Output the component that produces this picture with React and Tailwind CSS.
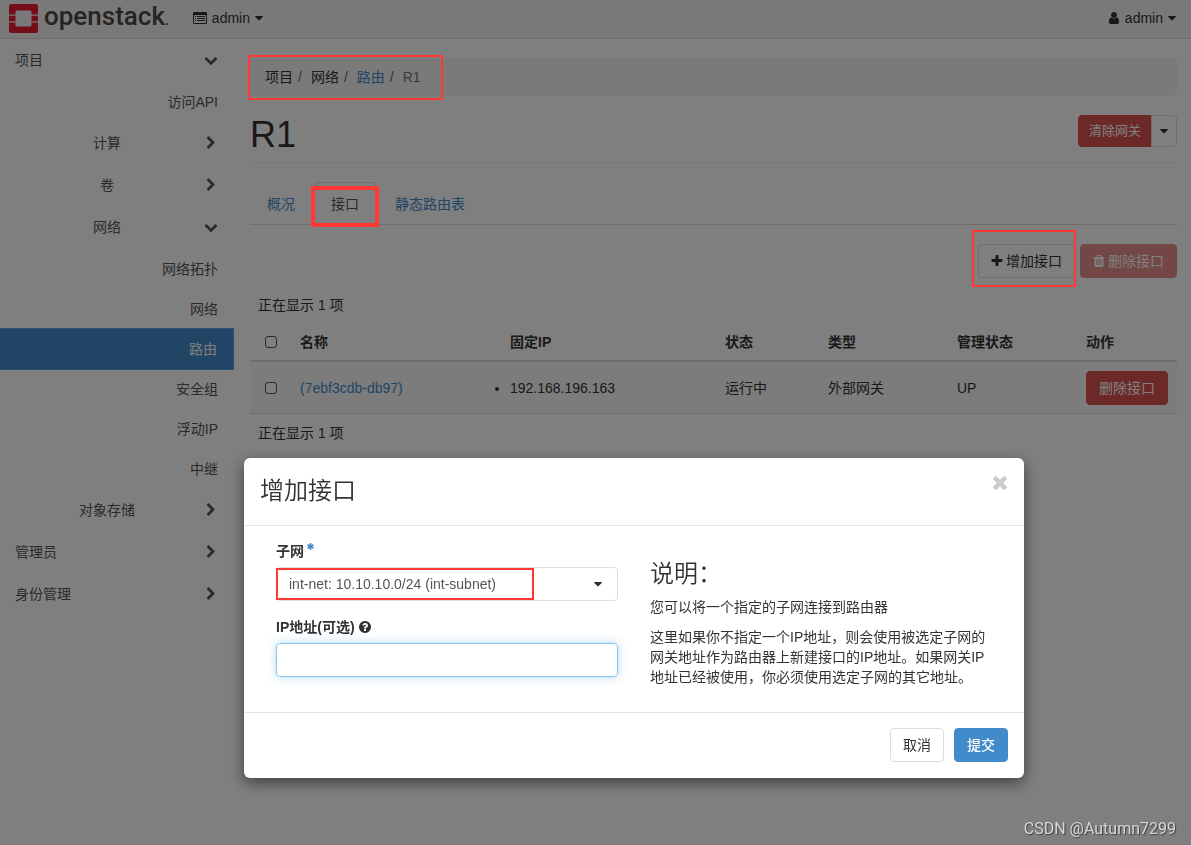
import React from "react";

const PATHS = {
  down: "M1683 808l-742 741q-19 19-45 19t-45-19l-742-741q-19-19-19-45.5t19-45.5l166-165q19-19 45-19t45 19l531 531 531-531q19-19 45-19t45 19l166 165q19 19 19 45.5t-19 45.5z",
  right: "M1363 877l-742 742q-19 19-45 19t-45-19l-166-166q-19-19-19-45t19-45l531-531-531-531q-19-19-19-45t19-45l166-166q19-19 45-19t45 19l742 742q19 19 19 45t-19 45z",
  caret: "M1408 704q0 26-19 45l-448 448q-19 19-45 19t-45-19l-448-448q-19-19-19-45t19-45 45-19h896q26 0 45 19t19 45z",
  plus: "M1600 736v192q0 40-28 68t-68 28h-416v416q0 40-28 68t-68 28h-192q-40 0-68-28t-28-68v-416h-416q-40 0-68-28t-28-68v-192q0-40 28-68t68-28h416v-416q0-40 28-68t68-28h192q40 0 68 28t28 68v416h416q40 0 68 28t28 68z",
  user: "M1536 1399q0 109-62.5 187t-150.5 78h-854q-88 0-150.5-78t-62.5-187q0-85 8.5-160.5t31.5-152 58.5-131 94-89 134.5-34.5q131 128 313 128t313-128q76 0 134.5 34.5t94 89 58.5 131 31.5 152 8.5 160.5zm-256-887q0 159-112.5 271.5t-271.5 112.5-271.5-112.5-112.5-271.5 112.5-271.5 271.5-112.5 271.5 112.5 112.5 271.5z",
  help: "M1024 1376v-192q0-14-9-23t-23-9h-192q-14 0-23 9t-9 23v192q0 14 9 23t23 9h192q14 0 23-9t9-23zm256-672q0-88-55.5-163t-138.5-116-170-41q-243 0-371 213-15 24 8 42l132 100q7 6 19 6 16 0 25-12 53-68 86-92 34-24 86-24 48 0 85.5 26t37.5 59q0 38-20 61t-68 45q-63 28-115.5 86.5t-52.5 125.5v36q0 14 9 23t23 9h192q14 0 23-9t9-23q0-19 21.5-49.5t54.5-49.5q32-18 49-28.5t46-35 44.5-48 28-60.5 12.5-81zm384 192q0 209-103 385.5t-279.5 279.5-385.5 103-385.5-103-279.5-279.5-103-385.5 103-385.5 279.5-279.5 385.5-103 385.5 103 279.5 279.5 103 385.5z",
  close: "M1490 1322q0 40-28 68l-136 136q-28 28-68 28t-68-28l-294-294-294 294q-28 28-68 28t-68-28l-136-136q-28-28-28-68t28-68l294-294-294-294q-28-28-28-68t28-68l136-136q28-28 68-28t68 28l294 294 294-294q28-28 68-28t68 28l136 136q28 28 28 68t-28 68l-294 294 294 294q28 28 28 68z",
  trash: "M704 1376v-704q0-14-9-23t-23-9h-64q-14 0-23 9t-9 23v704q0 14 9 23t23 9h64q14 0 23-9t9-23zm256 0v-704q0-14-9-23t-23-9h-64q-14 0-23 9t-9 23v704q0 14 9 23t23 9h64q14 0 23-9t9-23zm256 0v-704q0-14-9-23t-23-9h-64q-14 0-23 9t-9 23v704q0 14 9 23t23 9h64q14 0 23-9t9-23zm-544-992h448l-48-117q-7-9-17-11h-317q-10 2-17 11zm928 32v64q0 14-9 23t-23 9h-96v948q0 83-47 143.5t-113 60.5h-832q-66 0-113-58.5t-47-141.5v-952h-96q-14 0-23-9t-9-23v-64q0-14 9-23t23-9h309l70-167q15-37 54-63t79-26h320q40 0 79 26t54 63l70 167h309q14 0 23 9t9 23z",
  star: "M1546 1050q46 26 59.5 77.5t-12.5 97.5l-64 110q-26 46-77.5 59.5t-97.5-12.5l-266-153v307q0 52-38 90t-90 38h-128q-52 0-90-38t-38-90v-307l-266 153q-46 26-97.5 12.5t-77.5-59.5l-64-110q-26-46-12.5-97.5t59.5-77.5l266-154-266-154q-46-26-59.5-77.5t12.5-97.5l64-110q26-46 77.5-59.5t97.5 12.5l266 153v-307q0-52 38-90t90-38h128q52 0 90 38t38 90v307l266-153q46-26 97.5-12.5t77.5 59.5l64 110q26 46 12.5 97.5t-59.5 77.5l-266 154z",
};

function Icon({ name, className = "size-3.5", viewBox = "0 0 1792 1792" }) {
  return (
    <svg className={"shrink-0 " + className} viewBox={viewBox} fill="currentColor" aria-hidden="true">
      <path d={PATHS[name]} />
    </svg>
  );
}

function ListIcon() {
  return (
    <svg className="h-3 w-3.5 shrink-0" viewBox="0 0 14 12" fill="currentColor" aria-hidden="true">
      <path
        fillRule="evenodd"
        d="M1.2 0h11.6A1.2 1.2 0 0 1 14 1.200v9.600a1.200 1.200 0 0 1-1.200 1.200H1.200A1.200 1.200 0 0 1 0 10.800V1.200A1.200 1.200 0 0 1 1.200 0zM1 3v7.700c0 .2.1.3.3.3h11.400c.2 0 .3-.1.3-.3V3z"
      />
      <path d="M2 4h1v1H2zM4 4h8v1H4zM2 6h1v1H2zM4 6h8v1H4zM2 8h1v1H2zM4 8h8v1H4z" />
    </svg>
  );
}

function Logo() {
  return (
    <a href="#home" className="flex items-center gap-1.5">
      <svg className="size-[29px]" viewBox="0 0 29 29" aria-hidden="true">
        <path
          fill="#ea1a36"
          d="M2 0h25a2 2 0 0 1 2 2v8.500h-6.500V8a1.500 1.500 0 0 0-1.500-1.500H8A1.500 1.500 0 0 0 6.500 8v2.500H0V2a2 2 0 0 1 2-2zM0 11.700h6.500v5.600H0zM22.500 11.700H29v5.600h-6.500zM0 18.500h6.500V21A1.500 1.500 0 0 0 8 22.500h13a1.500 1.500 0 0 0 1.500-1.500v-2.500H29V27a2 2 0 0 1-2 2H2a2 2 0 0 1-2-2z"
        />
      </svg>
      <span className="font-[Roboto,sans-serif] text-[26px] leading-7 font-medium text-[#4d4845]">
        openstack<span className="text-[14px]">.</span>
      </span>
    </a>
  );
}

/* Red call-out frame that stays visible above the dimmed page. */
function Mark({ className }) {
  return <span aria-hidden="true" className={"pointer-events-none absolute z-50 border-[#ff3835] " + className} />;
}

function Group({ label, open, top }) {
  return (
    <button
      type="button"
      className={"flex h-[42px] w-full items-center pr-4 " + (top ? "pl-[15px]" : "pl-2.5")}
    >
      <span className={"flex-1 " + (top ? "text-left" : "text-center")}>{label}</span>
      <Icon name={open ? "down" : "right"} />
    </button>
  );
}

function Leaves({ items, active }) {
  return (
    <ul className="pt-px">
      {items.map((t) => (
        <li key={t}>
          <a
            href="#panel"
            className={
              "flex items-center justify-end pr-4 " +
              (t === active ? "-my-px h-[42px] border border-l-0 border-[#5aa5e6] bg-[#428bca] text-white" : "h-10")
            }
          >
            {t}
          </a>
        </li>
      ))}
    </ul>
  );
}

function Sidebar() {
  return (
    <nav className="w-[234px] shrink-0 text-[#555]">
      <Group label="项目" open top />
      <Leaves items={["访问API"]} />
      <Group label="计算" />
      <Group label="卷" />
      <Group label="网络" open />
      <Leaves items={["网络拓扑", "网络", "路由", "安全组", "浮动IP", "中继"]} active="路由" />
      <Group label="对象存储" />
      <Group label="管理员" top />
      <Group label="身份管理" top />
    </nav>
  );
}

function Check({ label }) {
  return (
    <input
      type="checkbox"
      aria-label={label}
      className="ml-[15px] block size-3 appearance-none rounded-[3px] border border-[#555] bg-white"
    />
  );
}

function Crumb({ children }) {
  return (
    <>
      <li>{children}</li>
      <li aria-hidden="true" className="mr-[9px] ml-[5px] text-[#666]">
        /
      </li>
    </>
  );
}

function Main() {
  return (
    <main className="min-w-0 flex-1 pt-[19px] pr-3.5 pl-4">
      <nav aria-label="breadcrumb" className="h-[38px] rounded bg-[#f5f5f5]">
        <ol className="relative flex h-full w-fit items-center pr-[21px] pl-[15px]">
          <Crumb>项目</Crumb>
          <Crumb>网络</Crumb>
          <Crumb>
            <a href="#routers" className="text-[#428bca]">路由</a>
          </Crumb>
          <li className="text-[#777]">R1</li>
          <Mark className="-top-[3px] -right-px -bottom-1 -left-0.5 border-2" />
        </ol>
      </nav>

      <header className="flex items-start justify-between border-b border-[#eee] pt-[19px] pb-2">
        <h1 className="text-[36px] leading-[39px]">R1</h1>
        <div className="flex h-8 text-[13px]">
          <button type="button" className="rounded-l border border-[#d9534f] bg-[#d9534f] px-2.5 text-white">
            清除网关
          </button>
          <button
            type="button"
            aria-label="更多操作"
            className="-ml-px flex w-[26px] items-center justify-center rounded-r border border-[#ddd]"
          >
            <Icon name="caret" />
          </button>
        </div>
      </header>

      <div className="mt-[19px] flex gap-0.5 border-b border-[#ddd] text-[#428bca]">
        <a href="#overview" className="-mb-px flex h-[43px] items-center border border-transparent px-4">概况</a>
        <a
          href="#interfaces"
          className="relative -mb-px flex h-[43px] items-center rounded-t border border-[#ddd] border-b-white px-4 text-[#555]"
        >
          接口
          <Mark className="top-[3px] -right-1 -bottom-[3px] -left-1 border-4" />
        </a>
        <a href="#routes" className="-mb-px flex h-[43px] items-center border border-transparent px-4">静态路由表</a>
      </div>

      <div className="mt-[19px] flex justify-end gap-[5px]">
        <div className="relative">
          <button
            type="button"
            className="flex h-[34px] items-center gap-[3px] rounded border border-[#ddd] px-3"
          >
            <Icon name="plus" className="size-3" viewBox="128 128 1536 1536" />
            增加接口
          </button>
          <Mark className="-top-3.5 -right-px -bottom-[9px] -left-1.5 border-2" />
        </div>
        <button
          type="button"
          disabled
          className="flex h-[34px] items-center gap-[3px] rounded border border-[#d9534f] bg-[#d9534f] px-3 text-white opacity-65"
        >
          <Icon name="trash" className="size-3" viewBox="128 128 1536 1536" />
          删除接口
        </button>
      </div>

      <p className="mt-2 flex h-[37px] items-center pl-2">正在显示 1 项</p>
      <table className="w-full table-fixed border-separate border-spacing-0 text-left">
        <colgroup>
          <col className="w-[42px]" />
          <col className="w-[210px]" />
          <col className="w-[215px]" />
          <col className="w-[103px]" />
          <col className="w-[129px]" />
          <col className="w-[129px]" />
          <col />
        </colgroup>
        <thead>
          <tr className="h-[39px] *:border-b-2 *:border-[#ddd] *:align-middle *:font-bold">
            <th><Check label="全选" /></th>
            <th className="pl-2">名称</th>
            <th className="pl-2">固定IP</th>
            <th className="pl-2">状态</th>
            <th className="pl-2">类型</th>
            <th className="pl-2">管理状态</th>
            <th className="pl-2">动作</th>
          </tr>
        </thead>
        <tbody>
          <tr className="h-[52px] bg-[#f9f9f9] *:border-b *:border-[#ddd] *:align-middle">
            <td><Check label="选择 (7ebf3cdb-db97)" /></td>
            <td className="pl-2"><a href="#port" className="text-[#428bca]">(7ebf3cdb-db97)</a></td>
            <td className="pl-2">
              <ul className="list-disc">
                <li>192.168.196.163</li>
              </ul>
            </td>
            <td className="pl-2">运行中</td>
            <td className="pl-2">外部网关</td>
            <td className="pl-2">UP</td>
            <td className="pl-2">
              <button
                type="button"
                className="block h-[34px] rounded border border-[#d9534f] bg-[#d9534f] px-3 whitespace-nowrap text-white"
              >
                删除接口
              </button>
            </td>
          </tr>
        </tbody>
      </table>
      <p className="flex h-[37px] items-center pl-2">正在显示 1 项</p>
    </main>
  );
}

function Modal() {
  return (
    <div className="fixed inset-0 z-40 flex items-start justify-center bg-black/50 pt-[458px] pl-[77px]">
      <div
        role="dialog"
        aria-labelledby="dialog-title"
        className="w-[780px] max-w-full rounded-md bg-white shadow-[0_5px_15px_rgba(0,0,0,0.5)]"
      >
        <div className="flex items-start justify-between border-b border-[#e5e5e5] px-4 pt-[17px] pb-[18px]">
          <h2 id="dialog-title" className="text-[24px] leading-8 font-[350]">增加接口</h2>
          <button type="button" aria-label="关闭" className="text-[#ccc]">
            <Icon name="close" className="size-4" viewBox="217 281 1358 1358" />
          </button>
        </div>

        <form id="add-interface" className="grid grid-cols-2 px-4 pb-[25px]">
          <div className="px-4 pt-[15px]">
            <label htmlFor="subnet" className="mb-1.5 flex h-5 items-center gap-[3px] font-bold">
              子网
              <Icon name="star" className="mb-2.5 size-[7px] text-[#428bca]" viewBox="128 128 1536 1536" />
            </label>
            <div className="relative">
              <select
                id="subnet"
                className="block h-[34px] w-full appearance-none rounded border border-[#ddd] bg-white px-3 text-[#555]"
              >
                <option>int-net: 10.10.10.0/24 (int-subnet)</option>
              </select>
              <span className="pointer-events-none absolute inset-y-0 right-[13px] flex items-center">
                <Icon name="caret" />
              </span>
              <Mark className="inset-y-px left-0 w-[258px] border-2" />
            </div>
            <label htmlFor="ip" className="mt-4 mb-1.5 flex h-5 items-center gap-[3px] font-bold">
              IP地址(可选)
              <Icon name="help" />
            </label>
            <input
              id="ip"
              type="text"
              className="block h-[34px] w-full rounded border border-[#8cc4f0] px-3 shadow-[0_0_8px_rgba(102,175,233,0.5)] outline-none"
            />
          </div>
          <div className="px-4 pt-[35px]">
            <h3 className="mb-2.5 text-[24px] leading-[26px] font-[350]">说明：</h3>
            <p className="mb-2.5">您可以将一个指定的子网连接到路由器</p>
            <p>
              这里如果你不指定一个IP地址，则会使用被选定子网的网关地址作为路由器上新建接口的IP地址。如果网关IP地址已经被使用，你必须使用选定子网的其它地址。
            </p>
          </div>
        </form>

        <div className="flex justify-end gap-2.5 border-t border-[#e5e5e5] px-4 pt-[15px] pb-4">
          <button type="button" className="h-[34px] rounded border border-[#ddd] px-3">取消</button>
          <button
            type="submit"
            form="add-interface"
            className="h-[34px] rounded border border-[#428bca] bg-[#428bca] px-3 font-medium text-white"
          >
            提交
          </button>
        </div>
      </div>
    </div>
  );
}

export default function App() {
  return (
    <div
      lang="zh-CN"
      className="flex min-h-screen flex-col bg-white font-['Liberation_Sans','Noto_Sans_CJK_SC',sans-serif] text-[14px] leading-5 text-[#333]"
    >
      <header className="flex h-[39px] items-center border-b border-[#ddd] bg-[#f3f3f3] pr-3 pb-0.5 pl-[9px]">
        <Logo />
        <button type="button" className="ml-6 flex items-center gap-[5px]">
          <ListIcon />
          <span className="flex items-center gap-0.5">
            admin
            <Icon name="caret" />
          </span>
        </button>
        <button type="button" className="ml-auto flex items-center gap-1">
          <Icon name="user" />
          <span className="flex items-center gap-0.5">
            admin
            <Icon name="caret" />
          </span>
        </button>
      </header>
      <div className="flex flex-1">
        <Sidebar />
        <Main />
      </div>
      <Modal />
      <p className="fixed right-[15px] bottom-1.5 z-50 font-[Roboto,sans-serif] text-[16px] text-[#d6d6d6] [text-shadow:1px_1px_1px_rgba(0,0,0,0.5)]">
        CSDN @Autumn7299
      </p>
    </div>
  );
}
